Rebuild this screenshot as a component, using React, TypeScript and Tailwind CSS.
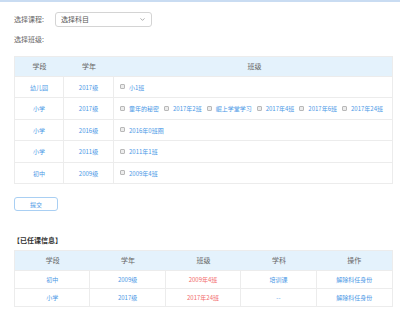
import { ChevronDown } from 'lucide-react';

const classRows = [
  { stage: '幼儿园', year: '2017级', classes: ['小1班'] },
  {
    stage: '小学',
    year: '2017级',
    classes: ['童年的秘密', '2017年2班', '崛上学堂学习', '2017年4班', '2017年6班', '2017年24班'],
  },
  { stage: '小学', year: '2016级', classes: ['2016年0班圈'] },
  { stage: '小学', year: '2011级', classes: ['2011年1班'] },
  { stage: '初中', year: '2009级', classes: ['2009年4班'] },
];

const rowHeights = ['h-[21px]', 'h-[22px]', 'h-[21px]', 'h-[22px]', 'h-[21px]'];

const assigned = [
  { stage: '初中', year: '2009级', cls: '2009年4班', subject: '培训课' },
  { stage: '小学', year: '2017级', cls: '2017年24班', subject: '--' },
];

function Box() {
  return <span className="inline-block w-[5px] h-[5px] border border-[#b8b8b8] bg-[#ececec] rounded-[1px] mr-[4px] mb-[1px]" />;
}

export default function App() {
  return (
    <div className="w-[400px] h-[316px] bg-white overflow-hidden text-[#555] [font-family:'Noto_Sans_CJK_SC','Liberation_Sans',sans-serif]">
      <div className="h-[2px] bg-[#c9dcf2]" />

      <div className="px-[14px]">
        <div className="flex items-center mt-[10px] h-[15px]">
          <span className="text-[7px] w-[41px] text-[#666]">选择课程:</span>
          <div className="w-[97px] h-[15px] border border-[#d4d4d4] rounded-[3px] flex items-center justify-between px-[5px]">
            <span className="text-[7px] text-[#555]">选择科目</span>
            <ChevronDown className="w-[7px] h-[7px] text-[#777]" strokeWidth={2} />
          </div>
        </div>

        <div className="text-[7px] text-[#666] mt-[7px] h-[10px] leading-[10px]">选择班级:</div>

        <div className="mt-[12px] border border-[#ececec] w-[379px]">
          <div className="grid grid-cols-[49px_50px_1fr] h-[19px] bg-[#e4f2fc] text-[7px] text-[#666] items-center text-center">
            <span>学段</span>
            <span>学年</span>
            <span className="pl-[3px]">班级</span>
          </div>
          {classRows.map((r, i) => (
            <div
              key={i}
              className={`grid grid-cols-[49px_50px_1fr] ${rowHeights[i]} border-t border-[#ececec] text-[6px] text-[#4a98e6]`}
            >
              <div className="flex items-center justify-center border-r border-[#ececec]">{r.stage}</div>
              <div className="flex items-center justify-center border-r border-[#ececec]">{r.year}</div>
              <div className="flex items-center pl-[6px] gap-[5px]">
                {r.classes.map((c) => (
                  <span key={c} className="flex items-center whitespace-nowrap">
                    <Box />
                    {c}
                  </span>
                ))}
              </div>
            </div>
          ))}
        </div>

        <button className="mt-[13px] w-[44px] h-[14px] border border-[#a9cff3] rounded-[3px] text-[6px] text-[#4a98e6] flex items-center justify-center">
          提交
        </button>

        <div className="mt-[24px] text-[7px] text-[#333] font-semibold h-[10px] leading-[10px] -ml-[1px]">【已任课信息】</div>

        <div className="mt-[5px] border border-[#ececec] w-[379px]">
          <div className="grid grid-cols-5 h-[19px] bg-[#e4f2fc] text-[7px] text-[#666] items-center text-center">
            <span>学段</span>
            <span>学年</span>
            <span>班级</span>
            <span>学科</span>
            <span>操作</span>
          </div>
          {assigned.map((a, i) => (
            <div key={i} className="grid grid-cols-5 h-[18px] border-t border-[#ececec] text-[6px] text-center">
              <div className="flex items-center justify-center border-r border-[#ececec] text-[#4a98e6]">{a.stage}</div>
              <div className="flex items-center justify-center border-r border-[#ececec] text-[#4a98e6]">{a.year}</div>
              <div className="flex items-center justify-center border-r border-[#ececec] text-[#f26b6b]">{a.cls}</div>
              <div className="flex items-center justify-center border-r border-[#ececec] text-[#4a98e6]">{a.subject}</div>
              <div className="flex items-center justify-center text-[#4a98e6]">解除科任身份</div>
            </div>
          ))}
        </div>
      </div>
    </div>
  );
}
